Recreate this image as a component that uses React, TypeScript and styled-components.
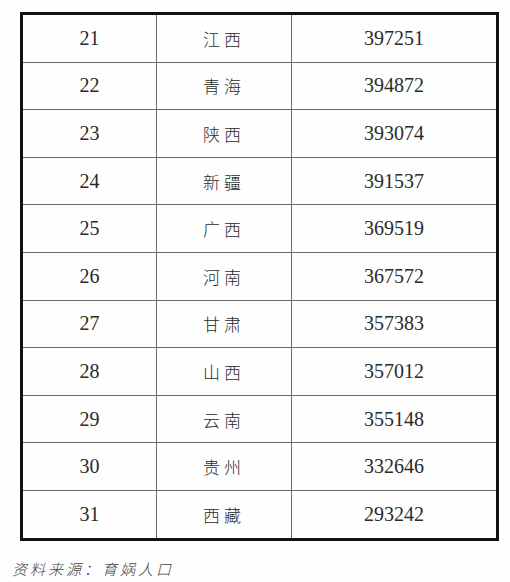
import React from 'react'
import styled, { createGlobalStyle } from 'styled-components'

const GlobalStyle = createGlobalStyle`
html, body {
  margin: 0;
  padding: 0;
  background: #fefefe;
}
`

const Page = styled.div`
width: 510px;
height: 582px;
padding: 12px 0 0 20px;
box-sizing: border-box;
`

const Table = styled.table`
width: 479px;
border-collapse: collapse;
border: 3px solid #111;
table-layout: fixed;
`

const Cell = styled.td<{ $cjk?: boolean }>`
height: 46.6px;
padding: 0;
border: 1px solid #6a6a6a;
text-align: center;
vertical-align: middle;
color: #2a2a2a;
font-family: ${p => (p.$cjk ? '"Noto Sans CJK SC", sans-serif' : '"Liberation Serif", serif')};
font-size: ${p => (p.$cjk ? '17px' : '20px')};
font-weight: ${p => (p.$cjk ? 300 : 400)};
letter-spacing: ${p => (p.$cjk ? '4px' : '0')};
`

const Source = styled.div`
margin: 17px 0 0 -8px;
font-family: "Noto Sans CJK SC", sans-serif;
font-size: 15px;
font-style: italic;
font-weight: 300;
color: #444;
letter-spacing: 3px;
`

const rows: [number, string, number][] = [
  [21, '江西', 397251],
  [22, '青海', 394872],
  [23, '陕西', 393074],
  [24, '新疆', 391537],
  [25, '广西', 369519],
  [26, '河南', 367572],
  [27, '甘肃', 357383],
  [28, '山西', 357012],
  [29, '云南', 355148],
  [30, '贵州', 332646],
  [31, '西藏', 293242],
]

const App = () => {
  return (
    <Page>
      <GlobalStyle />
      <Table>
        <colgroup>
          <col style={{ width: '135px' }} />
          <col style={{ width: '135px' }} />
          <col />
        </colgroup>
        <tbody>
          {rows.map(([rank, name, value]) => (
            <tr key={rank}>
              <Cell>{rank}</Cell>
              <Cell $cjk>{name}</Cell>
              <Cell>{value}</Cell>
            </tr>
          ))}
        </tbody>
      </Table>
      <Source>资料来源：育娲人口</Source>
    </Page>
  )
}

export default App
